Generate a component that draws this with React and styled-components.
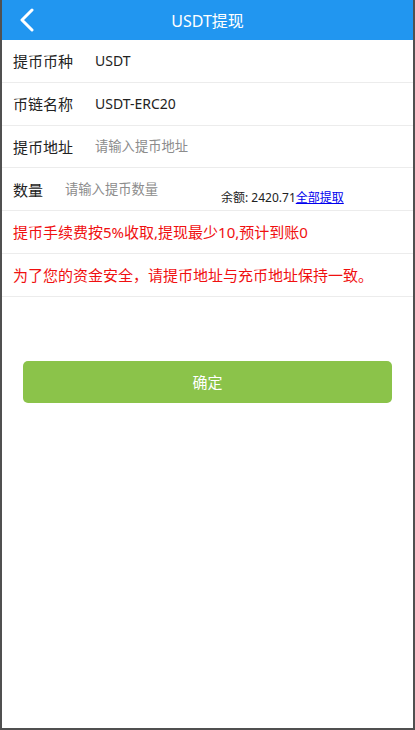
import React from "react";
import styled, { createGlobalStyle } from "styled-components";

const GlobalStyle = createGlobalStyle`
	html, body {
		margin: 0;
		padding: 0;
		background: #fff;
	}
	* {
		box-sizing: border-box;
	}
	body {
		font-family: "Noto Sans", "Noto Sans CJK SC", sans-serif;
	}
`;

const Page = styled.div`
	height: 730px;
	border: 2px solid #505050;
	border-top: none;
	background: #fff;
	display: flex;
	flex-direction: column;
`;

const Header = styled.div`
	height: 40px;
	background: #2196f0;
	color: #fff;
	display: flex;
	align-items: center;
	justify-content: center;
	position: relative;
	font-size: 16px;
`;

const Back = styled.div`
	position: absolute;
	left: 17px;
	top: 8px;
	width: 17px;
	height: 24px;
	display: flex;
`;

const Row = styled.div`
	height: 42.75px;
	border-bottom: 1px solid #ececec;
	display: flex;
	align-items: center;
	padding-left: 11px;
	color: ${({ warn }) => (warn ? "#f01010" : "#222")};
	font-size: 15px;
`;

const Label = styled.span`
	font-size: 15px;
	color: #222;
	margin-right: 22px;
`;

const Value = styled.span`
	font-size: 14px;
	color: #222;
`;

const Input = styled.input`
	border: none;
	outline: none;
	padding: 0;
	font-family: inherit;
	font-size: 13.3px;
	color: #222;
	width: ${({ w }) => w || "200px"};
	background: transparent;

	&::placeholder {
		color: #8c8c8c;
	}
`;

const Balance = styled.span`
	align-self: flex-end;
	padding-bottom: 4px;
	font-size: 12px;
	color: #222;

	a {
		color: #0000ee;
		text-decoration: underline;
	}
`;

const ButtonWrap = styled.div`
	padding: 64px 21px 0;
`;

const Button = styled.button`
	width: 100%;
	height: 42px;
	border: none;
	border-radius: 5px;
	background: #8bc34a;
	color: #fff;
	font-family: inherit;
	font-size: 15px;
`;

const App = () => {
	return (
		<Page>
			<GlobalStyle />
			<Header>
				<Back>
					<svg width="17" height="24" viewBox="0 0 17 24">
						<polyline
							points="13,2 3,12 13,22"
							fill="none"
							stroke="#fff"
							strokeWidth="3"
							strokeLinecap="round"
							strokeLinejoin="round"
						/>
					</svg>
				</Back>
				USDT提现
			</Header>
			<Row>
				<Label>提币币种</Label>
				<Value>USDT</Value>
			</Row>
			<Row>
				<Label>币链名称</Label>
				<Value>USDT-ERC20</Value>
			</Row>
			<Row>
				<Label>提币地址</Label>
				<Input placeholder="请输入提币地址" />
			</Row>
			<Row>
				<Label>数量</Label>
				<Input w="156px" placeholder="请输入提币数量" />
				<Balance>
					余额: 2420.71<a href="#">全部提取</a>
				</Balance>
			</Row>
			<Row warn>提币手续费按5%收取,提现最少10,预计到账0</Row>
			<Row warn>为了您的资金安全，请提币地址与充币地址保持一致。</Row>
			<ButtonWrap>
				<Button>确定</Button>
			</ButtonWrap>
		</Page>
	);
};

export default App;
